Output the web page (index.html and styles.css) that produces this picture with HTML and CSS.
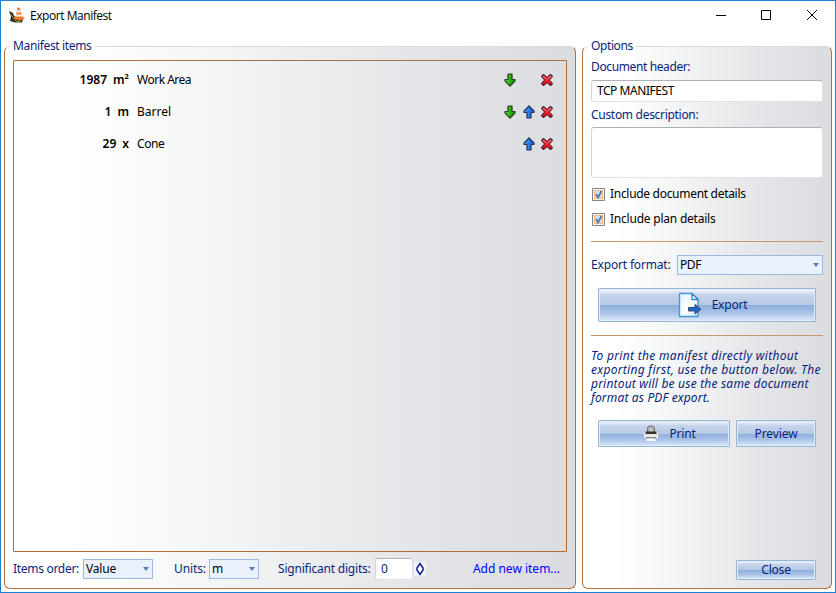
FILE: index.html
```html
<!DOCTYPE html>
<html lang="en">
<head>
<meta charset="utf-8">
<title>Export Manifest</title>
<link rel="stylesheet" href="styles.css">
</head>
<body>
<svg class="defs" width="0" height="0" aria-hidden="true">
  <defs>
    <linearGradient id="green" x2="1"><stop offset="0" stop-color="#6fd840"/><stop offset=".5" stop-color="#2fb416"/><stop offset="1" stop-color="#0d8b09"/></linearGradient>
    <linearGradient id="blue" x2="1"><stop offset="0" stop-color="#4a9cf5"/><stop offset="1" stop-color="#1458ce"/></linearGradient>
    <linearGradient id="red" x2="0" y2="1"><stop offset="0" stop-color="#ff8d92"/><stop offset=".5" stop-color="#ef2833"/><stop offset="1" stop-color="#e60b19"/></linearGradient>
    <linearGradient id="sheet" x2="1" y2="1"><stop offset="0" stop-color="#dcf1fe"/><stop offset=".5" stop-color="#fafdff"/><stop offset="1" stop-color="#d2eafa"/></linearGradient>
    <symbol id="down" viewBox="0 0 12 14"><path d="M4 1h4v5.500h3v1.500L6 13 1 8V6.500h3z" fill="url(#green)" stroke="#26401f" stroke-width="1.200" stroke-linejoin="round"/></symbol>
    <symbol id="up" viewBox="0 0 12 14"><path d="M4 13h4V7.500h3V6L6 1 1 6v1.500h3z" fill="url(#blue)" stroke="#26354f" stroke-width="1.200" stroke-linejoin="round"/></symbol>
    <symbol id="cross" viewBox="0 0 14 14"><path d="M3.500 1.500 7 4.600l3.500-3.100 2 2L9.300 7l3.200 3.500-2 2L7 9.400l-3.500 3.100-2-2L4.700 7 1.500 3.500z" fill="url(#red)" stroke="#57161d" stroke-width="1.100" stroke-linejoin="round"/></symbol>
  </defs>
</svg>
<div class="window">
  <header class="titlebar">
    <svg class="app-icon" width="16" height="16" viewBox="0 0 16 16">
      <path d="M0 4l4 2 1 3 4 2 5 1-1 3.500H6L1 14l1-4z" fill="#2d2b24"/>
      <path d="M1 7l3 3 3 4 5 1" fill="none" stroke="#b5a43a"/>
      <path d="M6 9.500l8.500.5 1 2-5 1.500-5.500-2z" fill="#f58433"/>
      <path d="M8.500.5h2L14 11q-4 2-7.500 0z" fill="#f37a25"/>
      <path d="M8 3.200h3.400l.8 2.300H7.600zM7 7.500h6l.6 2H6.700z" fill="#f4eee9"/>
    </svg>
    <h1>Export Manifest</h1>
    <svg class="controls" width="104" height="12" viewBox="0 0 104 12" fill="none" stroke="#000">
      <path d="M1 6.500h10M46.500 1.500h9v9h-9z"/><path d="M92 1l10 10M102 1L92 11"/>
    </svg>
  </header>
  <main>
    <fieldset class="panel items">
      <legend>Manifest items</legend>
      <div class="list">
        <div class="row"><div class="amount"><b>1987</b><b>m²</b></div><span class="area">Work Area</span><i><svg class="arrow"><use href="#down"/></svg></i><i></i><i><svg class="remove"><use href="#cross"/></svg></i></div>
        <div class="row"><div class="amount"><b>1</b><b>m</b></div><span>Barrel</span><i><svg class="arrow"><use href="#down"/></svg></i><i><svg class="arrow"><use href="#up"/></svg></i><i><svg class="remove"><use href="#cross"/></svg></i></div>
        <div class="row"><div class="amount"><b>29</b><b>x</b></div><span class="cone">Cone</span><i></i><i><svg class="arrow"><use href="#up"/></svg></i><i><svg class="remove"><use href="#cross"/></svg></i></div>
      </div>
      <div class="toolbar">
        <span class="order-label">Items order:</span><div class="select order">Value</div>
        <span class="units-label">Units:</span><div class="select units">m</div>
        <span class="digits-label">Significant digits:</span><div class="field digits">0</div>
        <svg class="spinner" width="12" height="14" viewBox="0 0 12 14"><path d="M0 0h12v14H0z" fill="#eef4fd"/><path d="M3 5.500L6 1l3 4.500v3L6 13 3 8.500z" fill="#fff"/><path d="M6 1.500L9 6v2l-3 4.500L3 8V6z" fill="none" stroke="#151592" stroke-width="1.500"/></svg>
        <a class="add">Add new item...</a>
      </div>
    </fieldset>
    <fieldset class="panel options">
      <legend>Options</legend>
      <div class="label header-label">Document header:</div>
      <div class="field header">TCP MANIFEST</div>
      <div class="label description-label">Custom description:</div>
      <div class="field description"></div>
      <div class="check"><svg width="13" height="13" viewBox="0 0 13 13"><path d="M.5.5h12v12H.5z" fill="#f4f4f4" stroke="#858585"/><path d="M2.500 2.500h8v8h-8z" fill="#d8dee8" stroke="#f5b77d"/><path d="M4 6l2 3.500L9.500 3" fill="none" stroke="#4878b7" stroke-width="1.700"/></svg><span>Include document details</span></div>
      <div class="check"><svg width="13" height="13" viewBox="0 0 13 13"><path d="M.5.5h12v12H.5z" fill="#f4f4f4" stroke="#858585"/><path d="M2.500 2.500h8v8h-8z" fill="#d8dee8" stroke="#f5b77d"/><path d="M4 6l2 3.500L9.500 3" fill="none" stroke="#4878b7" stroke-width="1.700"/></svg><span class="plan">Include plan details</span></div>
      <hr>
      <div class="format"><span>Export format:</span><div class="select">PDF</div></div>
      <div class="button export">
        <svg width="24" height="26" viewBox="0 0 24 26"><path d="M1.500 1.500h12.500l6 6v17h-18.500z" fill="url(#sheet)" stroke="#4596d2" stroke-width="1.400" stroke-linejoin="round"/><path d="M14 1.500v6h6z" fill="#fff" stroke="#3186cb" stroke-width="1.300" stroke-linejoin="round"/><path d="M10.500 15.500h6.500V12.500l6 4.700-6 4.800v-3H10.500z" fill="#1c65d6" stroke="#3a4f6a"/></svg>
        <span>Export</span>
      </div>
      <hr class="second">
      <p><span class="l1">To print the manifest directly without</span><span class="l2">exporting first, use the button below. The</span><span class="l3">printout will be use the same document</span><span class="l4">format as PDF export.</span></p>
      <div class="pair">
        <div class="button print">
          <svg width="16" height="17" viewBox="0 0 16 17"><path d="M4.500 7V2.500L6 1h4l1.500 1.500V7" fill="#a9a9a9" stroke="#77736f"/><path d="M6.500 3h3v4h-3z" fill="#c7c7c7"/><path d="M1 7h14v6H1z" fill="#e9e8e4"/><path d="M2.500 6.500h11V9h-11z" fill="#34332f"/><path d="M3 12h10v1.500H3z" fill="#8c8984"/><path d="M3.500 13.500h9V16h-9z" fill="#fafafa"/></svg>
          <span>Print</span>
        </div>
        <div class="button preview"><span>Preview</span></div>
      </div>
      <div class="button close"><span>Close</span></div>
    </fieldset>
  </main>
</div>
</body>
</html>
```
FILE: styles.css
```css
* { box-sizing: border-box; }
body { margin: 0; font: 12px/16px "Noto Sans", sans-serif; color: #000; }
.defs { position: absolute; }
svg { flex: none; }
.window { width: 836px; height: 593px; border: 1px solid #1b7fd2; background: #fff; display: flex; flex-direction: column; }
.titlebar { height: 37px; flex: none; display: flex; padding: 6px 16px 0 8px; }
.titlebar h1 { margin: 1px 0 0 5px; font: 12px/16px "Open Sans", sans-serif; letter-spacing: -.45px; }
.controls { margin: 2px 0 0 auto; }
main { flex: 1; display: grid; grid-template-columns: 572px 250px; column-gap: 6px; padding: 0 3px 3px; }
.panel { min-width: 0; height: 551px; margin: 0; padding: 0; border: 1px solid #b4713b; border-top-color: #e8d9cd; border-radius: 6px; background: linear-gradient(90deg, #fff 12%, #f7f8f8 30%, #eeeff1 50%, #e3e4e7 75%, #dadce0 100%); }
legend { margin-left: 5px; padding: 0 3px; height: 16px; color: #0a1f78; letter-spacing: -.4px; }
.items legend { letter-spacing: -.35px; }
.list { margin: 6px 8px 0; height: 492px; border: 1px solid #b06d37; border-radius: 1px; padding-top: 3px; }
.row { height: 32px; display: grid; grid-template-columns: 115px 372px 18px 19px 18px; align-items: center; }
.amount { display: flex; justify-content: flex-end; gap: 6px; }
.amount b { font-weight: 600; }
.row span { padding-left: 8px; }
.row .area { letter-spacing: -.5px; }
.row .cone { letter-spacing: -.4px; }
.row i { display: flex; justify-content: center; }
.arrow { width: 12px; height: 14px; }
.remove { width: 14px; height: 14px; }
.toolbar { display: flex; align-items: center; height: 22px; margin: 6px 8px 0; color: #0a1f78; white-space: nowrap; }
.order-label { width: 70px; letter-spacing: -.3px; }
.units-label { width: 35px; margin-left: 21px; letter-spacing: -.1px; }
.digits-label { width: 97px; margin-left: 19px; letter-spacing: -.2px; }
.select { height: 20px; border: 1px solid #9ab9df; background: #e9f1fc; color: #000; padding: 1px 5px 0 2px; display: flex; justify-content: space-between; line-height: 16px; }
.select::after { content: ""; width: 0; height: 0; border: 3px solid transparent; border-top: 4px solid #567fb8; border-bottom: 0; margin: 6px -2px 0 0; }
.order { width: 70px; letter-spacing: -.2px; }
.units { width: 50px; }
.field { background: #fff; border: 1px solid #dfe2e8; border-top-color: #afb1b7; border-left-color: #d2d5dc; border-radius: 3px; }
.digits { width: 38px; height: 22px; padding: 2px 5px; }
.spinner { margin-left: 1px; }
.add { margin-left: auto; margin-right: 7px; color: #00f; }
.options { display: flow-root; }
.label, .format { color: #0a1f78; }
.label { margin-left: 8px; height: 16px; }
.header-label { margin-top: 5px; letter-spacing: -.38px; }
.header { width: 232px; height: 22px; margin: 5px 8px 0; padding: 2px 5px; letter-spacing: -.45px; }
.description-label { margin-top: 5px; letter-spacing: -.3px; }
.description { width: 232px; height: 51px; margin: 4px 8px 8px; }
.check { height: 16px; margin: 0 0 9px 9px; display: flex; align-items: center; gap: 5px; letter-spacing: -.3px; }
.plan { letter-spacing: -.22px; }
.options hr { height: 1px; border: 0; margin: 14px 8px 0; background: #c9956b; }
.format { display: flex; justify-content: space-between; align-items: center; margin: 13px 8px 0; letter-spacing: -.17px; }
.format .select { width: 146px; letter-spacing: -.4px; }
.button { display: flex; justify-content: center; align-items: center; border: 1px solid #93b6d4; border-radius: 1px; box-shadow: inset 0 0 0 1px #e3edf9; background: linear-gradient(#f4f8fd, #c4d3eb 20%, #b6c8e4 50%, #8daeda 51%, #a9c3e8 75%, #dce9fa); color: #0a1f78; letter-spacing: -.2px; }
.export { width: 218px; height: 34px; margin: 13px 15px 0; padding-left: 11px; gap: 10px; }
.options .second { margin-top: 13px; }
.options p { margin: 13px 0 0 8px; font-style: italic; line-height: 14px; color: #0a1f78; white-space: nowrap; }
.options p span { display: block; }
.l1 { letter-spacing: .31px; }
.l2 { letter-spacing: .3px; }
.l3 { letter-spacing: .2px; }
.l4 { letter-spacing: .15px; }
.pair { display: flex; gap: 6px; margin: 15px 15px 0; }
.print { width: 132px; height: 27px; padding-left: 11px; gap: 10px; }
.preview { width: 80px; height: 27px; letter-spacing: -.1px; }
.close { width: 80px; height: 20px; margin: 113px 0 0 153px; }
```
